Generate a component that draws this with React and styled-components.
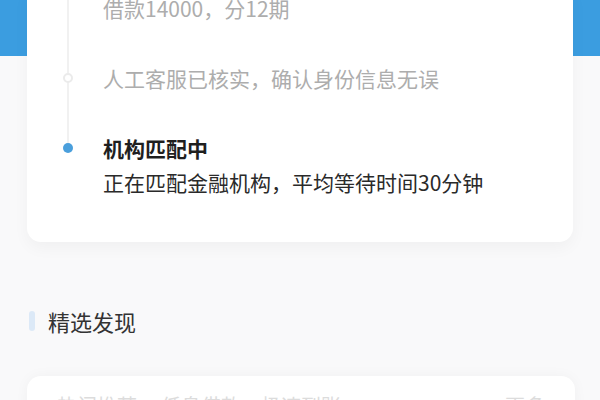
import { createGlobalStyle, styled } from "styled-components";

const GlobalStyle = createGlobalStyle`
  html, body {
    margin: 0;
    padding: 0;
    background: #f9f9fa;
    font-family: "Noto Sans CJK SC", "Noto Sans", sans-serif;
    overflow: hidden;
  }
`;

const steps = [
  { desc: "借款14000，分12期", dot: "none" },
  { desc: "人工客服已核实，确认身份信息无误", dot: "hollow" },
  { title: "机构匹配中", desc: "正在匹配金融机构，平均等待时间30分钟", dot: "active" },
];

export default function App() {
  return (
    <Page>
      <GlobalStyle />
      <TopSection>
        <ProgressCard>
          <Timeline>
            {steps.map((step, i) => (
              <Step key={i}>
                <Marker>{step.dot !== "none" && <Dot $kind={step.dot} />}</Marker>
                <StepBody>
                  {step.title && <StepTitle>{step.title}</StepTitle>}
                  <StepDesc $active={step.dot === "active"}>{step.desc}</StepDesc>
                </StepBody>
              </Step>
            ))}
          </Timeline>
        </ProgressCard>
      </TopSection>
      <SectionHead>
        <SectionBar />
        <SectionTitle>精选发现</SectionTitle>
      </SectionHead>
      <FeedCard>
        <FeedLine>
          <span>热门推荐</span>
          <span>低息借款，极速到账</span>
          <More>更多</More>
        </FeedLine>
      </FeedCard>
    </Page>
  );
}

const Page = styled.div`
  width: 600px;
  height: 400px;
  overflow: hidden;
`;

const TopSection = styled.section`
  display: flex;
  flex-direction: column;
  padding: 0 27px;
  background: linear-gradient(#3b9de0 0, #3b9de0 56px, transparent 56px);
`;

const ProgressCard = styled.div`
  margin-top: -9px;
  padding-bottom: 43px;
  background: #fff;
  border-radius: 0 0 14px 14px;
  box-shadow: 0 6px 16px rgba(0, 0, 0, 0.04);
`;

const Timeline = styled.div`
  position: relative;
  display: flex;
  flex-direction: column;
  gap: 36px;

  &::before {
    content: "";
    position: absolute;
    left: 40px;
    top: 0;
    bottom: 51px;
    width: 2px;
    background: #f1f1f1;
  }
`;

const Step = styled.div`
  position: relative;
  display: grid;
  grid-template-columns: 76px 1fr;
`;

const Marker = styled.div`
  height: 34px;
  display: flex;
  align-items: center;
  padding-left: 36px;
`;

const Dot = styled.span`
  position: relative;
  box-sizing: border-box;
  width: 10px;
  height: 10px;
  border-radius: 50%;
  background: ${(p) => (p.$kind === "active" ? "#4a9fdc" : "#fff")};
  border: ${(p) => (p.$kind === "active" ? "none" : "2px solid #ebebeb")};
`;

const StepBody = styled.div`
  display: flex;
  flex-direction: column;
`;

const StepTitle = styled.div`
  font-size: 21px;
  line-height: 34px;
  font-weight: 700;
  color: #1f1f1f;
`;

const StepDesc = styled.div`
  font-size: 21px;
  line-height: 34px;
  color: ${(p) => (p.$active ? "#2a2a2a" : "#adadad")};
`;

const SectionHead = styled.div`
  display: flex;
  align-items: center;
  gap: 13px;
  margin-top: 64px;
  padding-left: 29px;
  height: 30px;
`;

const SectionBar = styled.span`
  width: 6px;
  height: 20px;
  border-radius: 3px;
  background: #dce9f7;
`;

const SectionTitle = styled.h2`
  margin: 0;
  font-size: 22px;
  line-height: 30px;
  font-weight: 400;
  color: #333;
`;

const FeedCard = styled.div`
  margin: 40px 25px 0 27px;
  padding: 15px 30px;
  background: #fff;
  border-radius: 14px;
  box-shadow: 0 0 14px rgba(0, 0, 0, 0.04);
`;

const FeedLine = styled.div`
  display: flex;
  gap: 24px;
  font-size: 20px;
  line-height: 30px;
  color: #dcdcdc;
`;

const More = styled.span`
  margin-left: auto;
`;
